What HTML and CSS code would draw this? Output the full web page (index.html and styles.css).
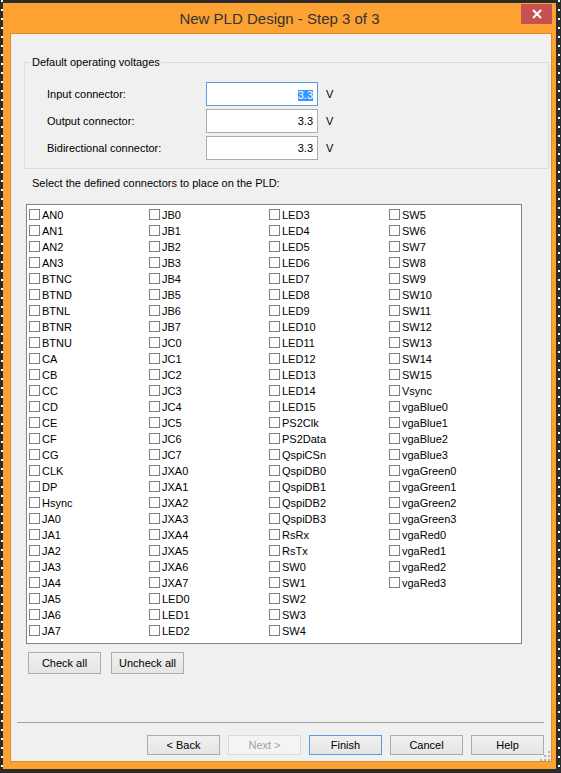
FILE: index.html
```html
<!DOCTYPE html>
<html lang="en">
<head>
    <meta charset="UTF-8">
    <title>New PLD Design - Step 3 of 3</title>
    <link rel="stylesheet" href="styles.css">
</head>
<body>

<div class="window">
    <div class="titlebar">
        <div class="title">New PLD Design - Step 3 of 3</div>
        <div class="btn-close">
            <svg width="10" height="10" viewBox="0 0 10 10">
                <path d="M1 1 L9 9 M9 1 L1 9" stroke="#fff" stroke-width="2"/>
            </svg>
        </div>
    </div>

    <div class="client">
        <fieldset class="group">
            <legend>Default operating voltages</legend>
            <div class="voltages">
                <label>Input connector:</label>
                <div class="field focused"><span class="sel">3.3</span></div>
                <span class="unit">V</span>

                <label>Output connector:</label>
                <div class="field">3.3</div>
                <span class="unit">V</span>

                <label>Bidirectional connector:</label>
                <div class="field">3.3</div>
                <span class="unit">V</span>
            </div>
        </fieldset>

        <div class="hint">Select the defined connectors to place on the PLD:</div>

        <div class="connectors" id="connectors"></div>

        <div class="list-buttons">
            <button class="btn">Check all</button>
            <button class="btn">Uncheck all</button>
        </div>

        <div class="separator"></div>

        <div class="wizard-buttons">
            <button class="btn">&lt; Back</button>
            <button class="btn disabled">Next &gt;</button>
            <button class="btn default">Finish</button>
            <button class="btn">Cancel</button>
            <button class="btn">Help</button>
        </div>

        <div class="grip">
            <svg width="10" height="10" viewBox="0 0 10 10" fill="#b4b4b4">
                <rect x="8" y="0" width="2" height="2"/>
                <rect x="4" y="4" width="2" height="2"/>
                <rect x="8" y="4" width="2" height="2"/>
                <rect x="0" y="8" width="2" height="2"/>
                <rect x="4" y="8" width="2" height="2"/>
                <rect x="8" y="8" width="2" height="2"/>
            </svg>
        </div>
    </div>
</div>

<script>
    // connectors on the board, listed in column order
    var names = [
        'AN0', 'AN1', 'AN2', 'AN3', 'BTNC', 'BTND', 'BTNL', 'BTNR', 'BTNU',
        'CA', 'CB', 'CC', 'CD', 'CE', 'CF', 'CG', 'CLK', 'DP', 'Hsync'
    ];
    var i;
    for (i = 0; i < 8; i++) names.push('JA' + i);
    for (i = 0; i < 8; i++) names.push('JB' + i);
    for (i = 0; i < 8; i++) names.push('JC' + i);
    for (i = 0; i < 8; i++) names.push('JXA' + i);
    for (i = 0; i < 16; i++) names.push('LED' + i);
    names.push('PS2Clk', 'PS2Data', 'QspiCSn');
    for (i = 0; i < 4; i++) names.push('QspiDB' + i);
    names.push('RsRx', 'RsTx');
    for (i = 0; i < 16; i++) names.push('SW' + i);
    names.push('Vsync');
    for (i = 0; i < 4; i++) names.push('vgaBlue' + i);
    for (i = 0; i < 4; i++) names.push('vgaGreen' + i);
    for (i = 0; i < 4; i++) names.push('vgaRed' + i);

    var list = document.getElementById('connectors');
    for (i = 0; i < names.length; i++) {
        var item = document.createElement('div');
        item.className = 'item';
        item.innerHTML = '<span class="check"></span><span class="name">' + names[i] + '</span>';
        list.appendChild(item);
    }
</script>

</body>
</html>
```

FILE: styles.css
```css
body {
    margin: 0;
    width: 561px;
    height: 773px;
    overflow: hidden;
    font-family: 'Liberation Sans', Arial, sans-serif;
    font-size: 11px;
    color: #000;
    background:
        repeating-linear-gradient(to bottom, #ffffff 0 2px, transparent 2px 9px) 1px 0 / 2px 100% no-repeat,
        repeating-linear-gradient(to bottom, #ffffff 0 2px, transparent 2px 9px) 558px 0 / 2px 100% no-repeat,
        #2b2b2b;
}

.window {
    margin: 3px 0 0 3px;
    width: 553px;
    height: 766px;
    background-color: #fba232;
    display: flex;
    flex-direction: column;
}

.titlebar {
    height: 30px;
    display: flex;
    align-items: flex-start;
}

.title {
    flex: 1;
    padding-left: 35px;
    text-align: center;
    font-size: 15px;
    line-height: 31px;
    color: #333;
}

.btn-close {
    width: 31px;
    height: 20px;
    margin: 1px 4px 0 0;
    background-color: #c75050;
    display: flex;
    align-items: center;
    justify-content: center;
}

.client {
    position: relative;
    box-sizing: border-box;
    height: 729px;
    margin: 0 4px 0 7px;
    border: 1px solid #de8a2e;
    background-color: #f0f0f0;
    padding-top: 21px;
}

.group {
    margin: 0 0 0 13px;
    width: 525px;
    box-sizing: border-box;
    border: 1px solid #dcdcdc;
    padding: 12px 0 8px 0;
}

.group legend {
    margin-left: 6px;
    padding: 0 1px;
    line-height: 15px;
}

.voltages {
    margin-left: 22px;
    display: grid;
    grid-template-columns: 159px 112px auto;
    grid-auto-rows: 24px;
    row-gap: 3px;
    align-items: center;
}

.field {
    box-sizing: border-box;
    height: 24px;
    border: 1px solid #acacac;
    background-color: #fff;
    padding-right: 4px;
    text-align: right;
    line-height: 22px;
}

.field.focused {
    border-color: #569de5;
}

.sel {
    display: inline-block;
    line-height: 11px;
    background-color: #3399ff;
    color: #fff;
    vertical-align: middle;
}

.unit {
    margin-left: 8px;
}

.hint {
    margin: 7px 0 0 21px;
    line-height: 15px;
}

.connectors {
    margin: 13px 0 0 15px;
    width: 496px;
    height: 440px;
    box-sizing: border-box;
    border: 1px solid #828282;
    background-color: #fff;
    padding: 2px 0 0 2px;
    display: grid;
    grid-auto-flow: column;
    grid-template-rows: repeat(27, 16px);
    grid-auto-columns: 120px;
}

.item {
    display: flex;
    align-items: flex-start;
    height: 16px;
}

.check {
    box-sizing: border-box;
    width: 11px;
    height: 11px;
    margin-top: 2px;
    border: 1px solid #808080;
    background-color: #fff;
}

.name {
    margin-left: 2px;
    line-height: 16px;
}

.btn {
    box-sizing: border-box;
    width: 73px;
    height: 20px;
    padding: 0;
    border: 1px solid #acacac;
    background: linear-gradient(#f0f0f0, #e5e5e5);
    font-family: 'Liberation Sans', Arial, sans-serif;
    font-size: 11px;
    color: #000;
}

.btn.default {
    border-color: #569de5;
}

.btn.disabled {
    border-color: #d9d9d9;
    background: #f4f4f4;
    color: #a0a0a0;
}

.list-buttons {
    margin: 8px 0 0 17px;
    display: flex;
    gap: 10px;
}

.list-buttons .btn {
    height: 22px;
}

.separator {
    margin: 48px 0 0 6px;
    width: 527px;
    border-top: 1px solid #a0a0a0;
}

.wizard-buttons {
    margin: 12px 0 0 136px;
    display: flex;
    gap: 8px;
}

.grip {
    position: absolute;
    right: 1px;
    bottom: 0;
    line-height: 0;
}
```
